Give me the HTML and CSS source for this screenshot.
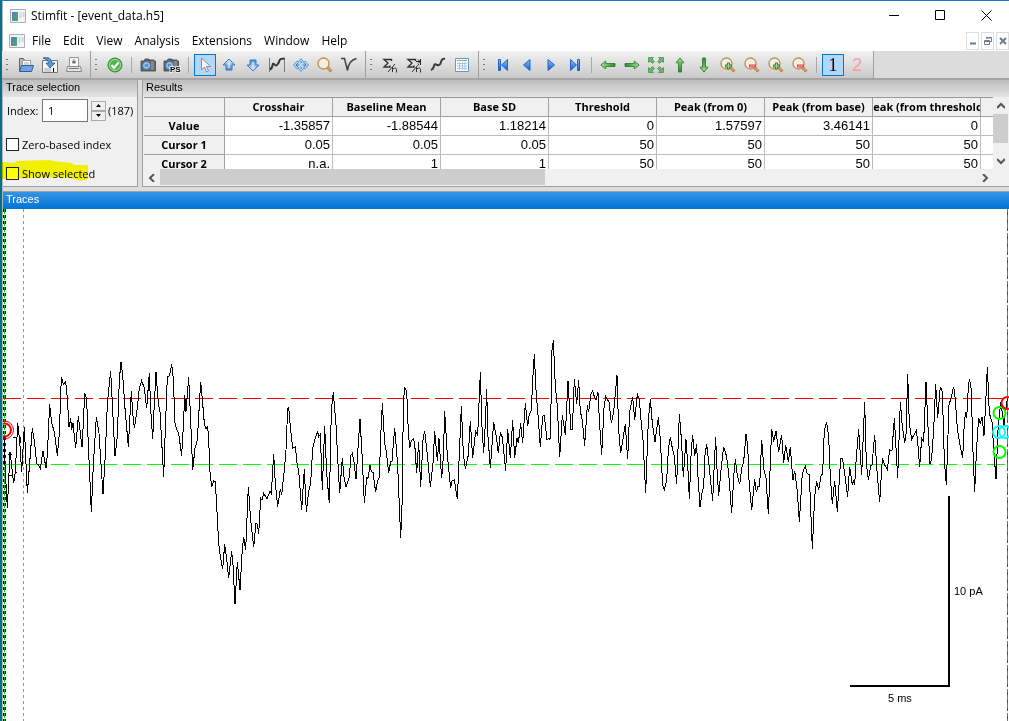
FILE: index.html
```html
<!DOCTYPE html>
<html lang="en">
<head>
<meta charset="utf-8">
<title>Stimfit - [event_data.h5]</title>
<link rel="stylesheet" href="styles.css">
</head>
<body>
<svg class="defs" aria-hidden="true">
  <defs>
    <linearGradient id="blue" x2="0" y2="1"><stop offset="0" stop-color="#e0f0ff"/><stop offset="1" stop-color="#4a8bd0"/></linearGradient>
    <linearGradient id="nav" x2="0" y2="1"><stop offset="0" stop-color="#8fc4f5"/><stop offset="1" stop-color="#0b5bd3"/></linearGradient>
    <linearGradient id="green" x2="0" y2="1"><stop offset="0" stop-color="#a5dd90"/><stop offset="1" stop-color="#2c8a2c"/></linearGradient>
    <linearGradient id="teal" x2="1" y2="1"><stop offset="0" stop-color="#4f7fb0"/><stop offset="1" stop-color="#4fae6f"/></linearGradient>
    <symbol id="app" viewBox="0 0 16 14"><path d="M.5.5h15v13H.5z" fill="#f4f4f4" stroke="#a8b0b4"/><path d="M2 3h6v9H2z" fill="url(#teal)"/><path d="M9.500 3h2v6h-2zM12.500 3h2v5h-2z" fill="#d3dadd"/></symbol>
    <symbol id="camera" viewBox="0 0 16 16"><path d="M1 4h3l1-2h4l1 2V3h4v1h1.500v10H1z" fill="#666" stroke="#444" stroke-width=".8"/><path d="M11 4h3v9h-3z" fill="#888"/><circle cx="6.500" cy="8.500" r="4" fill="#9cc6ee" stroke="#3a6ea5"/><circle cx="6.500" cy="8.500" r="2" fill="#5b97d6"/></symbol>
    <symbol id="arrow-up" viewBox="0 0 16 16"><path d="M8 2l6 6h-3v5H5V8H2z" fill="url(#blue)" stroke="#3a78b8"/><path d="M8 5v6" stroke="#fff"/></symbol>
    <symbol id="green-up" viewBox="0 0 16 16"><path d="M8 .8l4 5H9.500V15h-3V5.800H4z" fill="url(#green)" stroke="#28752a" stroke-width=".8"/></symbol>
    <symbol id="lens" viewBox="0 0 16 16"><circle cx="6.500" cy="6.500" r="5.500" fill="#f3efe8" stroke="#c09048" stroke-width="1.300"/><path d="M10.500 10.500l4 4" stroke="#b87c40" stroke-width="3"/><path d="M10.500 10.500l4 3.500" stroke="#f0c890"/></symbol>
    <symbol id="plus" viewBox="0 0 16 16"><use href="#lens"/><path d="M7 5.500h3v2h2v3h-2v2H7v-2H5v-3h2z" fill="#2f8c35"/><path d="M8.500 6.500v5M6 9h5" stroke="#9fdb95"/></symbol>
    <symbol id="minus" viewBox="0 0 16 16"><use href="#lens"/><path d="M5 7.500h7v3H5z" fill="#e83848"/><path d="M6 9h5" stroke="#ffb0b0"/></symbol>
    <symbol id="sigma" viewBox="0 0 16 16"><path d="M9.500 4V2.500H2l4 3.500-4 4h6V8.500" fill="none" stroke="#333" stroke-width="1.400"/><path d="M6 15l7-8M10.500 10v5M10.500 12q4-2 4 .5v3" fill="none" stroke="#333"/></symbol>
  </defs>
</svg>
<div class="window">
  <header class="titlebar">
    <svg class="app-icon"><use href="#app"/></svg>
    <h1>Stimfit - [event_data.h5]</h1>
    <div class="window-buttons">
      <button aria-label="Minimize"><svg viewBox="0 0 11 11"><path d="M0 5.500h10"/></svg></button>
      <button aria-label="Maximize"><svg viewBox="0 0 11 11"><path d="M.5.500h9v9h-9z"/></svg></button>
      <button aria-label="Close"><svg viewBox="0 0 11 11"><path d="M.5.500l10 10M10.500.500l-10 10"/></svg></button>
    </div>
  </header>
  <nav class="menubar">
    <svg class="app-icon"><use href="#app"/></svg>
    <button>File</button><button>Edit</button><button>View</button><button>Analysis</button><button>Extensions</button><button>Window</button><button>Help</button>
    <div class="child-buttons">
      <button aria-label="Minimize trace window"><svg viewBox="0 0 10 10"><path d="M2 7.500h6" stroke-width="2"/></svg></button>
      <button aria-label="Restore trace window"><svg viewBox="0 0 10 10"><path d="M3.500 3V1.500h5v4H7M1.500 4.500h5v4h-5zM1.500 5.500h5M3.500 2h5"/></svg></button>
      <button aria-label="Close trace window"><svg viewBox="0 0 10 10"><path d="M2 2l6 6M8 2l-6 6" stroke-width="2"/></svg></button>
    </div>
  </nav>
  <div class="toolbars">
    <div class="toolbar">
      <button aria-label="Open"><svg viewBox="0 0 16 16"><path d="M1.500 14V1.500h4l1 2h6V9" fill="#b8bcc0" stroke="#666"/><path d="M4.500 3.500h8v8h-8z" fill="#fff" stroke="#999"/><path d="M6 6h5M6 8h5" stroke="#aaa"/><path d="M3.500 8.500h12l-2 6h-12z" fill="#6ea3dc" stroke="#2b5f9e"/></svg></button>
      <button aria-label="Save"><svg viewBox="0 0 16 16"><path d="M.5 3.500h15v12H.5z" fill="#f5f5f5" stroke="#777"/><path d="M2 12h7M2 14h7" stroke="#aaa"/><path d="M11.500 11v4" stroke="#000"/><path d="M1 1q8-2 9 5h3l-5 5-4-5h3q-1-4-6-5z" fill="#5b9bd5" stroke="#24568c" stroke-width=".8"/></svg></button>
      <button aria-label="Print"><svg viewBox="0 0 16 16"><path d="M3.500.500h9v9h-9z" fill="#fafafa" stroke="#999"/><path d="M8 2v5M6 4l4 2M10 4L6 6" stroke="#555" stroke-width=".8"/><path d="M1.500 9.500h13l1 5H.5z" fill="#e4e4e4" stroke="#888"/><path d="M3 11.500h10" stroke="#777"/></svg></button>
    </div>
    <div class="toolbar">
      <button aria-label="Accept"><svg viewBox="0 0 16 16"><circle cx="8" cy="8" r="7" fill="#51b34f" stroke="#2e8b34"/><circle cx="8" cy="8" r="5.500" fill="none" stroke="#a8dfa0"/><path d="M4.500 8l2.500 3 4.500-5.500" fill="none" stroke="#fff" stroke-width="2"/></svg></button>
      <i class="sep"></i>
      <button aria-label="Snapshot"><svg><use href="#camera"/></svg></button>
      <button aria-label="Snapshot as PostScript"><svg class="ps-icon" viewBox="0 0 18 16"><use href="#camera" width="16" height="16"/><text x="7" y="15" class="ps">PS</text></svg></button>
      <i class="sep"></i>
      <button class="on" aria-label="Select"><svg viewBox="0 0 16 16"><path d="M4.500 1v12l3-3 2 5 2-1-2-4.500h4z" fill="#f7f7f7" stroke="#8c8c94"/></svg></button>
      <button aria-label="Previous peak"><svg><use href="#arrow-up"/></svg></button>
      <button aria-label="Next peak"><svg class="flip"><use href="#arrow-up"/></svg></button>
      <button aria-label="Fit trace"><svg viewBox="0 0 16 16"><path d="M.5 1v14M15.500 1v14" stroke="#777"/><path d="M1 12.500q2-1 2.500-4t2-1 3 0 2-4 5-2" fill="none" stroke="#333" stroke-width="2"/></svg></button>
      <button aria-label="Move"><svg viewBox="0 0 16 16"><path d="M8 1.500l2.500 3h2L15.500 8l-3 3.500h-2L8 14.500l-2.500-3h-2L.5 8l3-3.500h2z" fill="#b4d4f2" stroke="#4c86c0" stroke-width=".8"/><path d="M3 8h3M10 8h3M8 4v2M8 10v2M5.500 5.500L3 8l2.500 2.500M10.500 5.500L13 8l-2.500 2.500" fill="none" stroke="#3f7fc4"/></svg></button>
      <button aria-label="Zoom"><svg><use href="#lens"/></svg></button>
      <button aria-label="Event"><svg viewBox="0 0 16 16"><path d="M0 1.500h3.500l3 12q1-10 9-12" fill="none" stroke="#444" stroke-width="1.500"/></svg></button>
    </div>
    <div class="toolbar">
      <button aria-label="Mean"><svg><use href="#sigma"/></svg></button>
      <button aria-label="Aligned mean"><svg viewBox="0 0 16 16"><use href="#sigma"/><path d="M10 4.500h4M14.500 2v6M12 2.500l2 2-2 2" fill="none" stroke="#222"/></svg></button>
      <button aria-label="Fit"><svg viewBox="0 0 16 16"><path d="M1 13q2.500-1 3-4t3-1q3 1 4-3t4-3" fill="none" stroke="#3b3b3b" stroke-width="2"/></svg></button>
      <button aria-label="Table"><svg viewBox="0 0 16 16"><path d="M1.500 1.500h13v13h-13z" fill="#fff" stroke="#6496d0"/><path d="M3 3.500h10" stroke="#7ab87a"/><path d="M3 6.500h10M3 9h10M3 11.500h10M5.500 5v8M8.500 5v8M11 5v8" stroke="#a8c2e0"/></svg></button>
    </div>
    <div class="toolbar">
      <button aria-label="First trace"><svg viewBox="0 0 16 16"><path d="M3.500 2.500h2v11h-2zM12.500 2.500v11L6.500 8z" fill="url(#nav)" stroke="#1f66c8"/></svg></button>
      <button aria-label="Previous trace"><svg viewBox="0 0 16 16"><path d="M11 2.500v11L4.500 8z" fill="url(#nav)" stroke="#1f66c8"/></svg></button>
      <button aria-label="Next trace"><svg viewBox="0 0 16 16"><path d="M5 2.500v11L11.500 8z" fill="url(#nav)" stroke="#1f66c8"/></svg></button>
      <button aria-label="Last trace"><svg viewBox="0 0 16 16"><path d="M12.500 2.500h-2v11h2zM3.500 2.500v11L9.500 8z" fill="url(#nav)" stroke="#1f66c8"/></svg></button>
      <i class="sep"></i>
      <button aria-label="Left"><svg class="left"><use href="#green-up"/></svg></button>
      <button aria-label="Right"><svg class="right"><use href="#green-up"/></svg></button>
      <button aria-label="Fit to window"><svg viewBox="0 0 16 16"><path d="M.5.500h5L4 2l2.500 2.500-2 2L2 4 .5 5.500zM15.500.500v5L14 4l-2.500 2.500-2-2L12 2 10.500.500zM.5 15.500v-5L2 12l2.500-2.500 2 2L4 14l1.500 1.500zM15.500 15.500h-5L12 14l-2.500-2.500 2-2L14 12l1.500-1.500z" fill="#6cb668" stroke="#2f7f35" stroke-width=".6"/></svg></button>
      <button aria-label="Up"><svg><use href="#green-up"/></svg></button>
      <button aria-label="Down"><svg class="flip"><use href="#green-up"/></svg></button>
      <button aria-label="Enlarge x"><svg><use href="#plus"/></svg></button>
      <button aria-label="Shrink x"><svg><use href="#minus"/></svg></button>
      <button aria-label="Enlarge y"><svg><use href="#plus"/></svg></button>
      <button aria-label="Shrink y"><svg><use href="#minus"/></svg></button>
      <i class="sep"></i>
      <button class="on channel">1</button>
      <button class="channel second">2</button>
    </div>
  </div>
  <div class="panes">
    <section class="pane selection">
      <h2>Trace selection</h2>
      <div class="index-row">
        <label for="index">Index:</label>
        <input id="index" type="text" value="1">
        <span class="spin"><button aria-label="Increase"><svg viewBox="0 0 7 4"><path d="M0 4h7L3.500 0z"/></svg></button><button aria-label="Decrease"><svg viewBox="0 0 7 4"><path d="M0 0h7L3.500 4z"/></svg></button></span>
        <span>(187)</span>
      </div>
      <label class="check"><input type="checkbox">Zero-based index</label>
      <label class="check marked"><input type="checkbox">Show selected
        <svg class="marker" viewBox="0 0 90 22"><path d="M0 2l14 1 1-2 34-1 2 1 20 2 2 2h14v14l-8 2-6-2-12-2-30 1-31 1z" fill="#ffff00"/></svg></label>
    </section>
    <section class="pane results">
      <h2>Results</h2>
      <div class="grid-area">
        <div class="table-clip">
          <table>
            <thead><tr><th class="corner"></th><th>Crosshair</th><th>Baseline Mean</th><th>Base SD</th><th>Threshold</th><th>Peak (from 0)</th><th>Peak (from base)</th><th><span class="long">Peak (from threshold)</span></th><th></th></tr></thead>
            <tbody>
              <tr><th>Value</th><td>-1.35857</td><td>-1.88544</td><td>1.18214</td><td>0</td><td>1.57597</td><td>3.46141</td><td>0</td><td></td></tr>
              <tr><th>Cursor 1</th><td>0.05</td><td>0.05</td><td>0.05</td><td>50</td><td>50</td><td>50</td><td>50</td><td></td></tr>
              <tr><th>Cursor 2</th><td>n.a.</td><td>1</td><td>1</td><td>50</td><td>50</td><td>50</td><td>50</td><td></td></tr>
            </tbody>
          </table>
        </div>
        <div class="vscroll">
          <button aria-label="Scroll up"><svg viewBox="0 0 8 8"><path d="M0 6l4-4 4 4"/></svg></button><i class="thumb"></i>
          <button aria-label="Scroll down"><svg viewBox="0 0 8 8"><path d="M0 2l4 4 4-4"/></svg></button>
        </div>
        <div class="hscroll">
          <button aria-label="Scroll left"><svg viewBox="0 0 8 8"><path d="M6 0L2 4l4 4"/></svg></button><i class="thumb"></i>
          <button aria-label="Scroll right"><svg viewBox="0 0 8 8"><path d="M2 0l4 4-4 4"/></svg></button>
        </div>
      </div>
    </section>
  </div>
  <section class="traces">
    <h2>Traces</h2>
    <svg class="plot" viewBox="3 209 1006 512" role="img" aria-label="Current trace">
      <g shape-rendering="crispEdges" fill="none">
        <path d="M4.500 209v512" stroke="#00007a" stroke-width="3" stroke-dasharray="3 3"/>
        <path d="M4.500 209v512" stroke="#00c000" stroke-dasharray="5 1"/>
        <path d="M23.500 209v512" stroke="#0f0" stroke-dasharray="3 3"/>
        <path d="M3 398.500h1004" stroke="#f00" stroke-dasharray="18 6"/>
        <path d="M3 464.500h1004" stroke="#0f0" stroke-dasharray="18 6"/>
        <path d="M1007.500 209v512" stroke="#777" stroke-dasharray="20 4"/>
        <path d="M1007.500 212v512" stroke="#f00" stroke-dasharray="3 5 3 5 3 5"/>
        <g class="curve">
          <path transform="translate(0 340) scale(.33333)" d="M12,290 15,375 22,505 30,335 41,430 46,395 53,250 59,300 65,397 73,260 82,460 97,265 104,310 110,372 116,375 121,385 129,332 138,385 142,345 149,193 155,250 163,275 172,348 178,280 184,110 190,133 197,125 202,175 207,262 212,235 215,270 219,250 227,325 235,228 246,322 250,250 254,160 260,178 264,290 274,515 280,375 289,230 297,280 309,463 316,345 322,190 332,92 339,230 345,348 352,290 358,120 363,65 368,105 375,205 385,320 394,152 398,220 403,265 411,210 418,145 425,122 433,145 440,205 448,100 452,205 458,298 463,190 468,97 475,190 480,215 491,410 497,240 502,110 508,108 515,73 520,115 525,250 531,270 536,280 545,347 551,240 554,165 558,215 566,112 572,240 578,390 585,325 592,300 602,125 608,190 613,250 618,268 623,257 628,340 630,395 635,440 641,422 646,425 651,515 656,610 661,650 668,688 674,613 680,655 686,715 695,634 699,675 705,793 712,665 720,750 727,625 731,592 737,630 745,440 752,540 761,622 768,550 772,552 776,582"/>
          <path transform="translate(250 340) scale(.33333)" d="M26,582 32,475 36,480 41,460 51,477 60,453 64,460 71,343 76,430 83,500 91,448 95,465 103,390 108,330 113,205 116,202 121,260 128,325 136,320 142,380 146,390 155,510 163,388 169,517 176,455 182,430 188,325 195,297 203,275 206,290 211,283 217,450 224,257 230,400 238,490 244,210 250,157 258,255 264,370 269,460 277,355 282,410 288,440 298,410 303,345 307,340 312,365 318,418 325,310 330,236 336,340 343,490 350,412 354,415 360,375 364,395 369,397 377,457 382,425 388,412 392,290 397,190 404,310 409,335 416,400 422,365 426,363 434,263 443,375 452,595 457,470 460,185 464,143 470,152 475,275 479,325 484,302 491,297 495,325 500,400 506,307 512,440 519,300 524,272 532,345 541,440 549,370 554,273 562,363 567,295 575,415 580,350 584,213 592,345 602,445 606,422 613,420 622,478 629,320 634,199 640,340 646,387 655,345 661,242 668,355 677,275 683,285 691,97 696,260 701,340 706,250 710,148 714,290 721,385 731,247 739,290 745,340 751,277 757,292 767,392"/>
          <path transform="translate(500 330) scale(.33333)" d="M17,422 23,298 31,385 38,270 44,383 51,325 55,340 62,280 68,340 76,220 83,288 88,252 94,240 98,150 103,73 108,180 114,255 121,352 128,258 133,256 141,330 146,325 150,328 154,190 156,60 160,31 166,170 172,230 179,382 187,255 196,315 204,153 213,300 217,300 223,148 230,222 236,150 241,245 247,270 254,347 262,225 266,247 272,195 278,182 283,200 288,210 294,187 298,270 305,376 312,235 317,200 322,210 327,215 334,280 341,245 351,136 356,300 362,370 370,320 376,283 383,388 389,245 398,200 404,270 412,193 418,207 423,270 429,330 437,490 445,270 451,208 457,280 465,335 475,262 481,330 488,465 493,478 500,450 505,360 511,320 517,355 523,380 530,463 538,253 544,325 550,440 558,328 563,400 568,508 574,355 578,316 584,378 590,343 594,440 600,532 606,490 611,470 615,375 620,343 626,395 638,512 643,400 647,320 650,400 656,498 662,430 671,350 680,380 686,430 695,550 702,430 706,388 712,435 719,463 726,410 731,395 738,313 743,345 747,450 755,541 764,448"/>
          <path transform="translate(750 350) scale(.33333)" d="M14,388 19,427 24,408 29,410 35,270 42,360 48,385 55,493 61,340 65,236 71,275 78,243 86,305 95,254 101,340 107,285 115,335 121,290 127,370 129,390 134,362 142,425 148,517 156,385 160,362 166,350 171,370 178,375 187,598 194,440 200,393 206,420 213,378 218,370 223,240 230,217 236,260 241,380 247,463 254,392 262,485 272,325 278,327 284,370 293,440 299,350 307,405 310,390 314,405 319,320 326,238 335,376 344,157 349,340 355,390 362,348 366,345 374,254 380,350 389,457 397,325 404,345 412,358 419,300 426,302 433,205 443,383 451,157 457,230 464,278 468,255 473,72 478,220 485,268 493,252 499,242 503,275 509,350 515,265 521,275 528,95 534,230 540,343 545,325 551,240 557,103 563,205 571,110 577,125 583,330 589,406 597,165 602,148 611,110 616,150 622,235 629,280 638,325 643,215 647,187 650,205 654,130 658,86 664,118 668,280 674,427 680,290 686,203 691,222 696,200 702,257 707,160 712,50 718,190 726,215 732,310 738,388 744,240 752,157 757,190 762,228 767,180 772,147"/>
        </g>
        <path d="M949 496v190h-99.500" stroke="#000" stroke-width="2"/>
        <path d="M8 454.500h4M13 437h3M9 475h3M16 472h1M20.500 437v6" stroke="#000"/>
      </g>
      <g fill="none" stroke-width="2">
        <circle cx="4.500" cy="430" r="6.500" stroke="#f00"/><circle cx="4.500" cy="430" r="9" stroke="#f00" stroke-width="1"/>
        <circle cx="999.500" cy="413" r="6" stroke="#0f0"/><circle cx="999.500" cy="452" r="6" stroke="#0f0"/>
        <circle cx="999" cy="432" r="6" stroke="#0ff"/><circle cx="1005" cy="432" r="6" stroke="#0ff"/>
        <circle cx="1007.500" cy="403" r="6" stroke="#f00"/>
      </g>
      <text x="954" y="595">10 pA</text><text x="888" y="702">5 ms</text>
    </svg>
  </section>
</div>
</body>
</html>
```
FILE: styles.css
```css
* { box-sizing: border-box; }
body { margin: 0; background: #fff; color: #000; font: 12px/16px "Open Sans", sans-serif; }
button { margin: 0; padding: 0; border: 0; background: none; color: inherit; font: inherit; }
h1, h2 { margin: 0; font-weight: 400; }
svg { display: block; }
.defs { position: absolute; width: 0; height: 0; }
.window { min-height: 100vh; border-top: 1px solid #1a7ac8; border-left: 2px solid #0a7080; overflow: hidden; box-shadow: inset 1px 0 #a8b8c8; }
.app-icon { width: 16px; height: 14px; flex: none; }

.titlebar { display: flex; align-items: center; gap: 5px; height: 29px; padding-left: 8px; }
.titlebar h1 { flex: 1; font-size: 12px; }
.window-buttons { display: flex; }
.window-buttons button { width: 46px; height: 29px; display: grid; place-items: center; }
.window-buttons svg { width: 11px; height: 11px; fill: none; stroke: #000; }

.menubar { display: flex; align-items: center; height: 21px; padding-left: 7px; }
.menubar > button { padding: 0 6px; }
.menubar > .app-icon { margin-right: 1px; }
.child-buttons { display: flex; gap: 2px; margin-left: auto; }
.child-buttons button { width: 13px; height: 18px; border: 1px solid #ddd; display: grid; place-items: center; }
.child-buttons svg { width: 10px; height: 10px; fill: none; stroke: #6c7c8c; }

.toolbars { display: flex; height: 29px; background: #dcdcdc; border-bottom: 2px solid #a5a5a5; }
.toolbar { display: flex; align-items: center; padding: 0 4px 0 12px; border-right: 1px solid #a0a0a0; background: radial-gradient(circle, #777 1px, transparent 1px) 3px 6px / 4px 5px no-repeat, radial-gradient(circle, #777 1px, transparent 1px) 3px 11px / 4px 5px no-repeat, radial-gradient(circle, #777 1px, transparent 1px) 3px 16px / 4px 5px no-repeat, linear-gradient(#f2f2f2, #c9c9c9); }
.toolbar button { width: 22px; height: 22px; margin: 0 1px; display: grid; place-items: center; }
.toolbar svg { width: 16px; height: 16px; }
.toolbar .ps-icon { width: 18px; }
.toolbar .on { background: #b3d7f5; border: 1px solid #0078d7; }
.sep { width: 1px; height: 16px; margin: 0 4px; background: #a8a8a8; }
.flip { transform: rotate(180deg); }
.left { transform: rotate(-90deg); }
.right { transform: rotate(90deg); }
.ps { font: bold 8px "Liberation Sans", sans-serif; stroke: #eee; stroke-width: 2px; paint-order: stroke; }
.toolbar .channel { font: 18px/20px "Liberation Serif", serif; }
.toolbar .second { color: #ff9a9a; font-family: "Liberation Sans", sans-serif; }

.panes { display: flex; height: 107px; margin-left: 1px; background: #dcdcdc; gap: 4px; }
.pane { background: #f0f0f0; border: solid #a0a0a0; border-width: 0 1px 1px 0; }
.pane h2 { height: 17px; padding-left: 3px; font: 11px/15px "Liberation Sans", sans-serif; background: linear-gradient(#bdbdbd, #e4e4e4); }
.selection { width: 135px; flex: none; }
.results { flex: 1; min-width: 0; border-width: 0 0 1px 1px; display: flex; flex-direction: column; }
.index-row { display: flex; align-items: center; gap: 2px; padding: 0 0 1px 4px; height: 28px; white-space: nowrap; font-size: 11px; }
.index-row label { width: 33px; flex: none; }
.index-row input { width: 46px; height: 23px; padding: 0 5px; border: 1px solid #777; background: #fff; font: inherit; }
.spin { display: flex; flex-direction: column; margin-left: 1px; }
.spin button { width: 15px; height: 10px; border: 1px solid #aaa; display: grid; place-items: center; }
.spin svg { width: 5px; height: 3px; }
.check { position: relative; display: flex; align-items: center; gap: 3px; height: 29px; padding: 10px 0 0 3px; white-space: nowrap; font-size: 11px; line-height: 14px; }
.check input { appearance: none; flex: none; width: 13px; height: 13px; margin: 0; border: 1px solid #222; background: #fff; }
.marker { position: absolute; left: -2px; top: 6px; width: 90px; height: 22px; mix-blend-mode: multiply; pointer-events: none; }

.grid-area { flex: 1; min-height: 0; display: grid; grid-template: 1fr 17px / 1fr 16px; padding-left: 1px; }
.table-clip { overflow: hidden; background: #fff; border-top: 1px solid #999; }
table { width: 945px; table-layout: fixed; border-collapse: separate; border-spacing: 0; }
th, td { width: 108px; height: 19px; padding: 0; overflow: hidden; white-space: nowrap; border: solid #bcbcbc; border-width: 0 1px 1px 0; }
th { background: #f0f0f0; border-color: #a0a0a0; font: bold 11px/16px "Open Sans", sans-serif; text-align: center; }
.corner { width: 81px; }
.long { display: flex; justify-content: center; }
td { padding-right: 2px; text-align: right; font: 13px/18px "Liberation Sans", sans-serif; }
tbody th { line-height: 18px; }
.vscroll { display: flex; flex-direction: column; }
.vscroll .thumb { height: 29px; margin-right: 1px; background: #cdcdcd; }
.vscroll button, .hscroll button { width: 16px; height: 17px; flex: none; display: grid; place-items: center; }
.vscroll button:last-child { margin-top: auto; }
.hscroll { display: flex; }
.hscroll .thumb { width: 385px; height: 16px; background: #cdcdcd; }
.hscroll button:last-child { margin-left: auto; }
.vscroll svg, .hscroll svg { width: 8px; height: 8px; fill: none; stroke: #555; stroke-width: 2; }

.traces { margin-left: 1px; border-top: 4px solid #dcdcdc; }
.traces h2 { height: 18px; padding-left: 3px; border-top: 1px solid #a0a0a0; color: #fff; font: 11px/15px "Liberation Sans", sans-serif; background: linear-gradient(#3494e6, #0074d4); }
.plot { width: 100%; height: auto; font: 11px "Liberation Sans", sans-serif; }
.curve path { stroke: #000; vector-effect: non-scaling-stroke; }
```
